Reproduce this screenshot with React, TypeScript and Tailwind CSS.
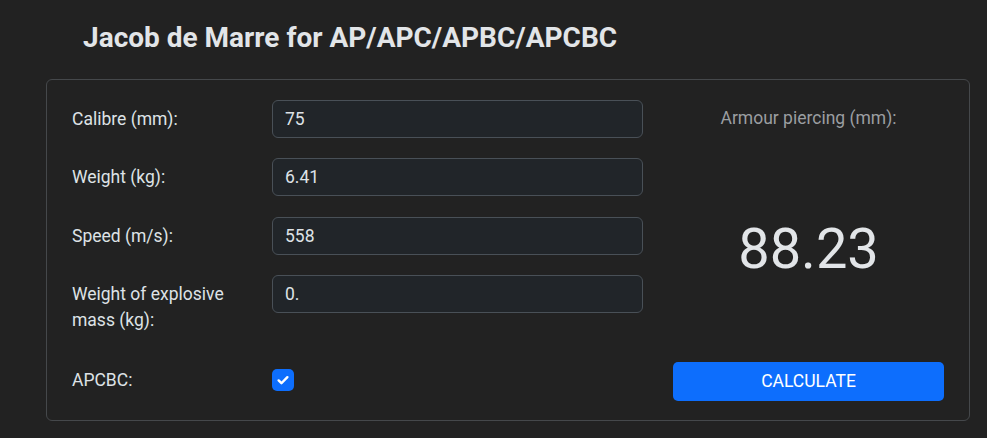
import React from 'react';

const fields = [
  { label: 'Calibre (mm):', value: '75' },
  { label: 'Weight (kg):', value: '6.41' },
  { label: 'Speed (m/s):', value: '558' },
  { label: 'Weight of explosive mass (kg):', value: '0.' },
];

const App = () => {
  return (
    <div className="min-h-[438px] bg-[#222222] font-['Roboto',sans-serif] text-[17.5px] leading-[1.5] text-[#dee2e6]">
      {/* Title */}
      <h3 className="pl-[83px] pt-[21px] pb-[24px] text-[28px] font-bold leading-[1.2] text-[#e2e5e8]">
        Jacob de Marre for AP/APC/APBC/APCBC
      </h3>

      <div className="ml-[46px] flex w-[924px] rounded-[6px] border border-[#45484b] pt-[20px] pb-[19px] pl-[25px] pr-[25px]">
        {/* Inputs */}
        <div className="flex w-[571px] flex-col gap-[20.5px]">
          {fields.map((f) => (
            <div key={f.label} className="flex items-start">
              <label className="w-[200px] pr-[40px] pt-[6px]">{f.label}</label>
              <input
                readOnly
                value={f.value}
                className="h-[38px] w-[371px] rounded-[6px] border border-[#495057] bg-[#212529] px-[12px] text-[#dee2e6] outline-none"
              />
            </div>
          ))}
          <div className="mt-[5px] flex h-[42px] items-center">
            <label className="w-[200px]">APCBC:</label>
            <span className="flex h-[22px] w-[22px] items-center justify-center rounded-[5px] bg-[#0d6efd]">
              <svg width="14" height="14" viewBox="0 0 16 16" fill="none">
                <path d="M3 8.5l3.2 3.2L13 4.8" stroke="white" strokeWidth="2.8" strokeLinecap="round" strokeLinejoin="round" />
              </svg>
            </span>
          </div>
        </div>

        {/* Result */}
        <div className="ml-[30px] flex w-[271px] flex-col items-center">
          <div className="pt-[5px] text-[#9b9ea1]">Armour piercing (mm):</div>
          <div className="mt-[90px] text-[56px] leading-none text-[#e2e5e8]">88.23</div>
          <button className="mt-auto h-[39px] w-full rounded-[5px] bg-[#0d6efd] uppercase text-white">
            Calculate
          </button>
        </div>
      </div>
    </div>
  );
};

export default App;
